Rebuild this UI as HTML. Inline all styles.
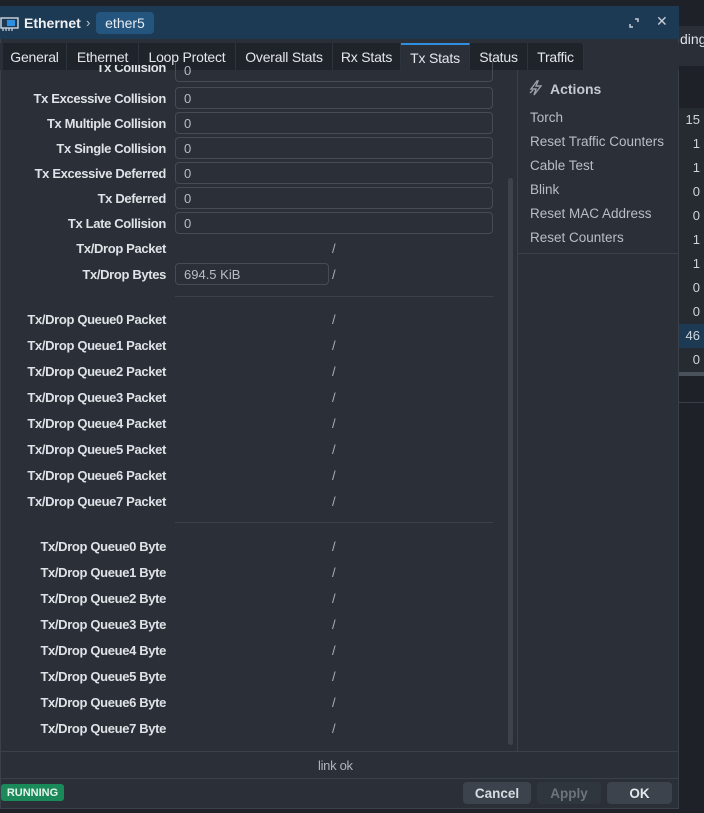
<!DOCTYPE html>
<html><head><style>
*{margin:0;padding:0;box-sizing:border-box}
body{width:704px;height:813px;background:#1e2228;font-family:"Liberation Sans",sans-serif;color:#d4d7dc;position:relative;overflow:hidden;font-size:13px}
.a{position:absolute}
.lbl{position:absolute;right:538px;font-size:13px;color:#dfe2e6;white-space:nowrap;letter-spacing:-0.35px;font-weight:bold;margin-top:1px}
.inp{position:absolute;left:175px;width:318px;height:22px;border:1px solid #454c56;border-radius:4px;color:#b8bdc4;padding-left:8px;line-height:21px;font-size:13px}
.sl{position:absolute;left:332px;color:#aab0b8;font-size:13px;margin-top:1px}
.tab{position:absolute;top:43px;height:27px;background:#1f242b;color:#e4e6ea;font-size:14px;line-height:28px;text-align:center;border-right:1px solid #2e343c;letter-spacing:-0.2px}
.act{position:absolute;left:530px;color:#b9bec5;font-size:13.5px;margin-top:1px}
.num{position:absolute;right:4px;color:#d0d4d9;font-size:13px}
</style></head><body>
<div class="a" style="left:678px;top:26px;width:26px;height:40px;background:#2a2f37"></div>
<div class="a" style="left:680px;top:31px;color:#dfe2e6;font-size:14px">ding</div>
<div class="a" style="left:678px;top:108px;width:26px;height:268px;background:#262b32"></div>
<div class="a" style="left:678px;top:324px;width:26px;height:24px;background:#1d3a55"></div>
<div class="num" style="top:112px">15</div><div class="num" style="top:136px">1</div><div class="num" style="top:160px">1</div><div class="num" style="top:184px">0</div><div class="num" style="top:208px">0</div><div class="num" style="top:232px">1</div><div class="num" style="top:256px">1</div><div class="num" style="top:280px">0</div><div class="num" style="top:304px">0</div><div class="num" style="top:328px">46</div><div class="num" style="top:352px">0</div>
<div class="a" style="left:678px;top:372px;width:26px;height:4px;background:#4a515b"></div>
<div class="a" style="left:678px;top:402px;width:26px;height:1px;background:#3a4049"></div>
<div class="a" style="left:0;top:6px;width:679px;height:803px;background:#2b3038;border:1px solid #3a414b"></div>
<div class="a" style="left:0;top:6px;width:679px;height:33px;background:#1d3a55"></div>
<svg class="a" style="left:0;top:16px" width="20" height="16" viewBox="0 0 20 16"><rect x="1" y="2" width="17" height="10" fill="none" stroke="#cfd6de" stroke-width="1.4"/><rect x="7" y="4" width="8" height="6" fill="#2e8fe0"/><path d="M3 12v3M6 12v3M9 12v3M12 12v3" stroke="#cfd6de" stroke-width="1.2"/></svg>
<div class="a" style="left:24px;top:15px;font-size:14px;font-weight:bold;color:#eef0f3">Ethernet</div>
<div class="a" style="left:86px;top:15px;font-size:13px;color:#c0c6cd">›</div>
<div class="a" style="left:96px;top:12px;width:58px;height:22px;border-radius:4px;background:#24557f;color:#e6ecf2;font-size:14px;line-height:23px;text-align:center">ether5</div>
<svg class="a" style="left:629px;top:18px" width="10" height="10" viewBox="0 0 10 10"><path d="M6 1h3v3M1 6v3h3" fill="none" stroke="#c8ced6" stroke-width="1.5"/></svg>
<div class="a" style="left:656px;top:13px;font-size:14px;color:#c8ced6">✕</div>
<div class="a" style="left:0;top:43px;width:679px;height:27px;background:#2b3038"></div>
<div class="tab" style="left:3px;width:64px">General</div>
<div class="tab" style="left:67px;width:72px">Ethernet</div>
<div class="tab" style="left:139px;width:97px">Loop Protect</div>
<div class="tab" style="left:236px;width:97px">Overall Stats</div>
<div class="tab" style="left:333px;width:68px">Rx Stats</div>
<div class="tab" style="left:401px;width:69px;background:#2b3038;border-top:2px solid #2e8fe0;line-height:26px">Tx Stats</div>
<div class="tab" style="left:470px;width:58px">Status</div>
<div class="tab" style="left:528px;width:56px;border-radius:0 4px 0 0">Traffic</div>
<div class="inp" style="top:62px;height:20px;border-top:none;line-height:18px;border-radius:0 0 4px 4px">0</div>
<div class="lbl" style="top:64px;height:12px;overflow:hidden;line-height:5px">Tx Collision</div>
<div class="lbl" style="top:90px">Tx Excessive Collision</div><div class="inp" style="top:87px">0</div>
<div class="lbl" style="top:115px">Tx Multiple Collision</div><div class="inp" style="top:112px">0</div>
<div class="lbl" style="top:140px">Tx Single Collision</div><div class="inp" style="top:137px">0</div>
<div class="lbl" style="top:165px">Tx Excessive Deferred</div><div class="inp" style="top:162px">0</div>
<div class="lbl" style="top:190px">Tx Deferred</div><div class="inp" style="top:187px">0</div>
<div class="lbl" style="top:215px">Tx Late Collision</div><div class="inp" style="top:212px">0</div>
<div class="lbl" style="top:240px">Tx/Drop Packet</div><div class="sl" style="top:240px">/</div>
<div class="lbl" style="top:266px">Tx/Drop Bytes</div><div class="inp" style="top:263px;width:154px">694.5 KiB</div><div class="sl" style="top:266px">/</div>
<div class="a" style="left:175px;top:296px;width:318px;height:1px;background:#3a414b"></div>
<div class="lbl" style="top:311px">Tx/Drop Queue0 Packet</div><div class="sl" style="top:311px">/</div>
<div class="lbl" style="top:337px">Tx/Drop Queue1 Packet</div><div class="sl" style="top:337px">/</div>
<div class="lbl" style="top:363px">Tx/Drop Queue2 Packet</div><div class="sl" style="top:363px">/</div>
<div class="lbl" style="top:389px">Tx/Drop Queue3 Packet</div><div class="sl" style="top:389px">/</div>
<div class="lbl" style="top:415px">Tx/Drop Queue4 Packet</div><div class="sl" style="top:415px">/</div>
<div class="lbl" style="top:441px">Tx/Drop Queue5 Packet</div><div class="sl" style="top:441px">/</div>
<div class="lbl" style="top:467px">Tx/Drop Queue6 Packet</div><div class="sl" style="top:467px">/</div>
<div class="lbl" style="top:493px">Tx/Drop Queue7 Packet</div><div class="sl" style="top:493px">/</div>
<div class="a" style="left:175px;top:522px;width:318px;height:1px;background:#3a414b"></div>
<div class="lbl" style="top:538px">Tx/Drop Queue0 Byte</div><div class="sl" style="top:538px">/</div>
<div class="lbl" style="top:564px">Tx/Drop Queue1 Byte</div><div class="sl" style="top:564px">/</div>
<div class="lbl" style="top:590px">Tx/Drop Queue2 Byte</div><div class="sl" style="top:590px">/</div>
<div class="lbl" style="top:616px">Tx/Drop Queue3 Byte</div><div class="sl" style="top:616px">/</div>
<div class="lbl" style="top:642px">Tx/Drop Queue4 Byte</div><div class="sl" style="top:642px">/</div>
<div class="lbl" style="top:668px">Tx/Drop Queue5 Byte</div><div class="sl" style="top:668px">/</div>
<div class="lbl" style="top:694px">Tx/Drop Queue6 Byte</div><div class="sl" style="top:694px">/</div>
<div class="lbl" style="top:720px">Tx/Drop Queue7 Byte</div><div class="sl" style="top:720px">/</div>
<div class="a" style="left:508px;top:178px;width:5px;height:567px;border-radius:3px;background:#3c434d"></div>
<div class="a" style="left:517px;top:70px;width:1px;height:681px;background:#3a414b"></div>
<svg class="a" style="left:529px;top:80px" width="14" height="16" viewBox="0 0 14 16"><path d="M8 1L2 9h5l-2 6 7-9H7l2-5z" fill="none" stroke="#9aa1aa" stroke-width="1.4"/><path d="M1 13l3-3" stroke="#9aa1aa" stroke-width="1.3"/></svg>
<div class="a" style="left:550px;top:81px;font-weight:bold;font-size:14px;color:#c5cad1">Actions</div>
<div class="act" style="top:109px">Torch</div>
<div class="act" style="top:133px">Reset Traffic Counters</div>
<div class="act" style="top:157px">Cable Test</div>
<div class="act" style="top:181px">Blink</div>
<div class="act" style="top:205px">Reset MAC Address</div>
<div class="act" style="top:229px">Reset Counters</div>
<div class="a" style="left:518px;top:253px;width:160px;height:1px;background:#3a414b"></div>
<div class="a" style="left:0;top:751px;width:679px;height:1px;background:#3a414b"></div>
<div class="a" style="left:318px;top:758px;color:#aeb4bb;font-size:13px;letter-spacing:-0.3px">link ok</div>
<div class="a" style="left:0;top:778px;width:679px;height:1px;background:#3a414b"></div>
<div class="a" style="left:1px;top:784px;width:63px;height:17px;border-radius:3px;background:#1b8a5a;color:#e6f3ec;font-size:11px;font-weight:bold;line-height:18px;text-align:center">RUNNING</div>
<div class="a" style="left:463px;top:782px;width:68px;height:22px;border-radius:4px;background:#3c434d;color:#d8dce1;font-weight:bold;font-size:13.5px;line-height:23px;text-align:center">Cancel</div>
<div class="a" style="left:537px;top:782px;width:64px;height:22px;border-radius:4px;background:#30363e;color:#6d747d;font-weight:bold;font-size:13.5px;line-height:23px;text-align:center">Apply</div>
<div class="a" style="left:607px;top:782px;width:65px;height:22px;border-radius:4px;background:#3c434d;color:#e4e7eb;font-weight:bold;font-size:13.5px;line-height:23px;text-align:center">OK</div>
</body></html>
